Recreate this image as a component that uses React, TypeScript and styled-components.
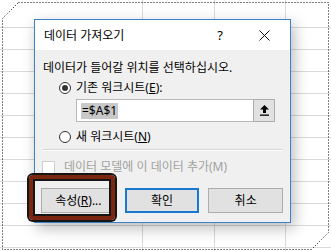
import styled, { createGlobalStyle } from "styled-components";

const GlobalStyle = createGlobalStyle`
  html, body {
    margin: 0;
    padding: 0;
    background: #fff;
  }
  body {
    font-family: "Noto Sans", "Noto Sans CJK KR", sans-serif;
    font-size: 12px;
    color: #000;
  }
`;

const gridLine = "linear-gradient(#dadada, #dadada)";

// spreadsheet cells behind the dialog: column lines on top, a white strip
// hiding the first row line, then the repeating row lines
const Sheet = styled.div`
  position: relative;
  width: 331px;
  height: 251px;
  overflow: hidden;
  box-sizing: border-box;
  padding: 19px 0 0 34px;
  background-color: #fff;
  background-image: ${gridLine}, ${gridLine}, ${gridLine},
    linear-gradient(#fff, #fff),
    linear-gradient(to bottom, #dadada 1px, transparent 1px);
  background-size: 1px 100%, 1px 100%, 1px 100%, 100% 12px, 100% 22px;
  background-position: 142px 0, 214px 0, 285px 0, 0 0, 0 5px;
  background-repeat: no-repeat, no-repeat, no-repeat, no-repeat, repeat;
`;

const Frame = styled.svg`
  position: absolute;
  left: 0;
  top: 0;
  pointer-events: none;
`;

const Dialog = styled.div`
  width: 257px;
  height: 204px;
  box-sizing: border-box;
  border: 1px solid #3b82c8;
  background: #f0f0f0;
  display: flex;
  flex-direction: column;
  box-shadow: 3px 5px 14px rgba(0, 0, 0, 0.28);
`;

const TitleBar = styled.div`
  height: 30px;
  flex: none;
  background: #fff;
  display: flex;
  align-items: center;
  padding: 0 20px 0 9px;
`;

const Title = styled.span`
  flex: 1;
  line-height: 16px;
  margin-top: 1px;
`;

const Help = styled.span`
  font-size: 13px;
  line-height: 16px;
  margin-right: 36px;
`;

const Body = styled.div`
  flex: 1;
  display: flex;
  flex-direction: column;
  padding: 10px 7px 0 8px;
`;

const Line = styled.div<{ $gap?: number; $indent?: number; $muted?: boolean }>`
  display: flex;
  align-items: center;
  gap: 5px;
  height: 16px;
  line-height: 16px;
  white-space: nowrap;
  margin-top: ${(p) => p.$gap ?? 0}px;
  padding-left: ${(p) => p.$indent ?? 0}px;
  color: ${(p) => (p.$muted ? "#a2a2a2" : "#000")};
`;

const Radio = styled.span<{ $on?: boolean }>`
  width: 12px;
  height: 12px;
  box-sizing: border-box;
  border-radius: 50%;
  border: 1px solid #333;
  background: #fff;
  display: flex;
  align-items: center;
  justify-content: center;
  &::after {
    content: "";
    width: 6px;
    height: 6px;
    border-radius: 50%;
    background: ${(p) => (p.$on ? "#333" : "transparent")};
  }
`;

const Check = styled.span`
  width: 13px;
  height: 13px;
  box-sizing: border-box;
  border: 1px solid #cfcfcf;
  background: #fff;
  margin-left: -1px;
  margin-right: 4px;
`;

const Key = styled.u`
  text-underline-offset: 1px;
`;

const RefRow = styled.div`
  display: flex;
  height: 23px;
  margin: 3px 0 0 33px;
  width: 199px;
`;

const RefInput = styled.div`
  flex: 1;
  box-sizing: border-box;
  border: 1px solid #b8b8b8;
  border-right: none;
  background: #fff;
  display: flex;
  align-items: center;
  padding-left: 4px;
`;

const Selected = styled.span`
  background: #c8c8c8;
  line-height: 16px;
  padding: 0 1px;
`;

const CollapseButton = styled.div`
  width: 22px;
  box-sizing: border-box;
  border: 1px solid #adadad;
  background: #e1e1e1;
  display: flex;
  align-items: center;
  justify-content: center;
`;

const Separator = styled.div`
  height: 1px;
  width: 240px;
  margin-top: 4px;
  background: #d6d6d6;
  border-bottom: 1px solid #fff;
`;

const Buttons = styled.div`
  display: flex;
  gap: 9px;
  margin: 13px 0 0 -2px;
`;

const Button = styled.div<{ $default?: boolean }>`
  width: 75px;
  height: 25px;
  box-sizing: border-box;
  background: #e1e1e1;
  border: ${(p) => (p.$default ? "2px solid #1b78d0" : "1px solid #adadad")};
  display: flex;
  align-items: center;
  justify-content: center;
  line-height: 16px;
`;

const Highlight = styled.div`
  position: absolute;
  left: 29px;
  top: 175px;
  width: 86px;
  height: 45px;
  box-sizing: border-box;
  border: 4px solid #7a2611;
  border-radius: 4px;
  box-shadow: 0 0 0 2px #151515, inset 0 0 0 2px #151515;
`;

export default function App() {
  return (
    <>
      <GlobalStyle />
      <Sheet>
        <Dialog>
          <TitleBar>
            <Title>데이터 가져오기</Title>
            <Help>?</Help>
            <svg width="11" height="11" viewBox="0 0 11 11">
              <path d="M0.5 0.5 L10.5 10.5 M10.5 0.5 L0.5 10.5" stroke="#111" strokeWidth="1" />
            </svg>
          </TitleBar>
          <Body>
            <Line>데이터가 들어갈 위치를 선택하십시오.</Line>
            <Line $gap={4} $indent={16}>
              <Radio $on />
              <span>
                기존 워크시트(<Key>E</Key>):
              </span>
            </Line>
            <RefRow>
              <RefInput>
                <Selected>=$A$1</Selected>
              </RefInput>
              <CollapseButton>
                <svg width="9" height="11" viewBox="0 0 9 11">
                  <path d="M4.5 0 L9 4.5 L6 4.5 L6 8 L3 8 L3 4.5 L0 4.5 Z" fill="#000" />
                  <rect x="0" y="9.5" width="9" height="1.3" fill="#000" />
                </svg>
              </CollapseButton>
            </RefRow>
            <Line $gap={7} $indent={16}>
              <Radio />
              <span>
                새 워크시트(<Key>N</Key>)
              </span>
            </Line>
            <Separator />
            <Line $gap={8} $muted>
              <Check />
              <span>데이터 모델에 이 데이터 추가(M)</span>
            </Line>
            <Buttons>
              <Button>
                속성(<Key>R</Key>)...
              </Button>
              <Button $default>확인</Button>
              <Button>취소</Button>
            </Buttons>
          </Body>
        </Dialog>
        <Highlight />
        <Frame width="331" height="251" viewBox="0 0 331 251">
          <polygon
            points="18.5,2.5 328.5,2.5 328.5,232.5 311.5,249.5 2.5,249.5 2.5,18.5"
            fill="none"
            stroke="#000"
            strokeWidth="1"
            strokeDasharray="1 2"
          />
        </Frame>
      </Sheet>
    </>
  );
}
